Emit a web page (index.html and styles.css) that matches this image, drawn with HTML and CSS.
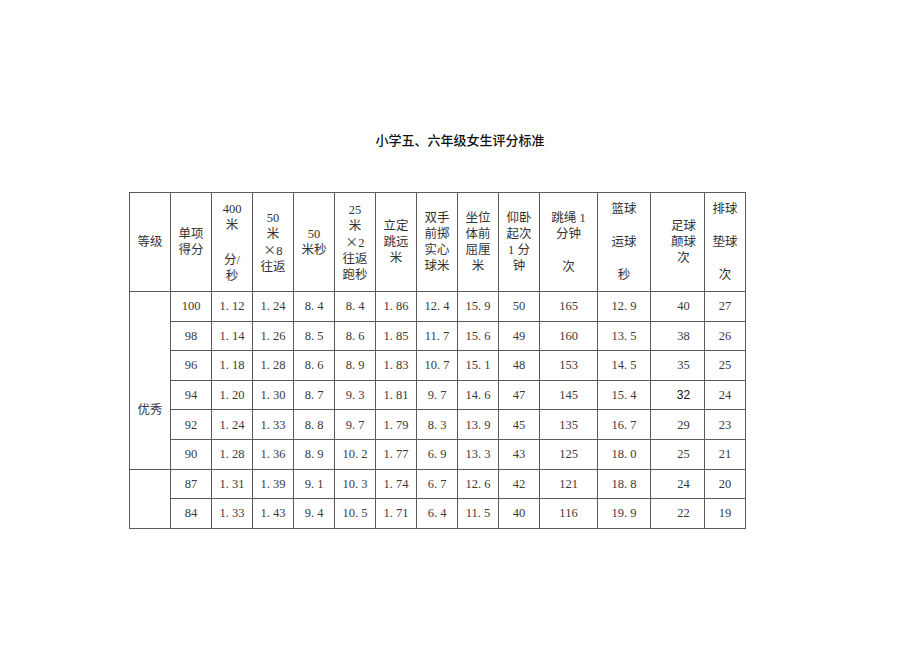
FILE: index.html
```html
<!DOCTYPE html>
<html lang="zh">
<head>
<meta charset="utf-8">
<title>小学五、六年级女生评分标准</title>
<link rel="stylesheet" href="styles.css">
</head>
<body>
<div class="page">
  <h1 class="title">小学五、六年级女生评分标准</h1>
  <table class="grid">
    <colgroup>
      <col class="c41"><col class="c41"><col class="c41"><col class="c41"><col class="c41">
      <col class="c41"><col class="c41"><col class="c41"><col class="c41"><col class="c41">
      <col class="c58"><col class="c53"><col class="c54"><col class="c41">
    </colgroup>
    <tr class="head">
      <td>等级</td>
      <td>单项<br>得分</td>
      <td>400<br>米<div class="sp19"></div>分/<br>秒</td>
      <td>50<br>米<br><span class="cjk">×</span>8<br>往返</td>
      <td>50<br>米秒</td>
      <td>25<br>米<br><span class="cjk">×</span>2<br>往返<br>跑秒</td>
      <td>立定<br>跳远<br>米</td>
      <td>双手<br>前掷<br>实心<br>球米</td>
      <td>坐位<br>体前<br>屈厘<br>米</td>
      <td>仰卧<br>起次<br>1 分<br>钟</td>
      <td>跳绳 1<br>分钟<div class="sp16"></div>次</td>
      <td class="soft">篮球<div class="sp17"></div>运球<div class="sp17"></div>秒</td>
      <td class="soft shift">足球<br>颠球<br>次</td>
      <td class="soft">排球<div class="sp17"></div>垫球<div class="sp17"></div>次</td>
    </tr>
    <tr>
      <td class="grade" rowspan="6">优秀</td>
      <td>100</td><td>1. 12</td><td>1. 24</td><td>8. 4</td><td>8. 4</td><td>1. 86</td><td>12. 4</td><td>15. 9</td><td>50</td><td>165</td><td class="soft">12. 9</td><td class="soft shift">40</td><td class="soft">27</td>
    </tr>
    <tr>
      <td>98</td><td>1. 14</td><td>1. 26</td><td>8. 5</td><td>8. 6</td><td>1. 85</td><td>11. 7</td><td>15. 6</td><td>49</td><td>160</td><td class="soft">13. 5</td><td class="soft shift">38</td><td class="soft">26</td>
    </tr>
    <tr class="light">
      <td>96</td><td>1. 18</td><td>1. 28</td><td>8. 6</td><td>8. 9</td><td>1. 83</td><td>10. 7</td><td>15. 1</td><td>48</td><td>153</td><td class="soft">14. 5</td><td class="soft shift">35</td><td class="soft">25</td>
    </tr>
    <tr>
      <td>94</td><td>1. 20</td><td>1. 30</td><td>8. 7</td><td>9. 3</td><td>1. 81</td><td>9. 7</td><td>14. 6</td><td>47</td><td>145</td><td class="soft">15. 4</td><td class="soft shift"><span class="sans">32</span></td><td class="soft">24</td>
    </tr>
    <tr>
      <td>92</td><td>1. 24</td><td>1. 33</td><td>8. 8</td><td>9. 7</td><td>1. 79</td><td>8. 3</td><td>13. 9</td><td>45</td><td>135</td><td class="soft">16. 7</td><td class="soft shift">29</td><td class="soft">23</td>
    </tr>
    <tr>
      <td>90</td><td>1. 28</td><td>1. 36</td><td>8. 9</td><td>10. 2</td><td>1. 77</td><td>6. 9</td><td>13. 3</td><td>43</td><td>125</td><td class="soft">18. 0</td><td class="soft shift">25</td><td class="soft">21</td>
    </tr>
    <tr class="light">
      <td class="grade" rowspan="2"></td>
      <td>87</td><td>1. 31</td><td>1. 39</td><td>9. 1</td><td>10. 3</td><td>1. 74</td><td>6. 7</td><td>12. 6</td><td>42</td><td>121</td><td class="soft">18. 8</td><td class="soft shift">24</td><td class="soft">20</td>
    </tr>
    <tr>
      <td>84</td><td>1. 33</td><td>1. 43</td><td>9. 4</td><td>10. 5</td><td>1. 71</td><td>6. 4</td><td>11. 5</td><td>40</td><td>116</td><td class="soft">19. 9</td><td class="soft shift">22</td><td class="soft">19</td>
    </tr>
  </table>
</div>
</body>
</html>
```

FILE: styles.css
```css
html, body {
  margin: 0;
  padding: 0;
  background: #ffffff;
}

.page {
  width: 920px;
  height: 651px;
  padding-top: 132px;
  box-sizing: border-box;
  font-family: "Liberation Serif", "Noto Sans CJK SC", serif;
  color: #333333;
}

.title {
  margin: 0;
  text-align: center;
  font-family: "Noto Sans CJK SC", sans-serif;
  font-size: 13px;
  line-height: 16px;
  font-weight: 500;
  color: #111111;
}

.grid {
  margin: 44px 0 0 129px;
  border-collapse: collapse;
  table-layout: fixed;
  width: 617px;
  font-size: 12.5px;
  line-height: 16px;
}

.c41 { width: 41px; }
.c58 { width: 58px; }
.c53 { width: 53px; }
.c54 { width: 54px; }

.grid td {
  border: 1px solid #5a5a5a;
  padding: 0;
  text-align: center;
  vertical-align: middle;
  height: 28.6px;
  color: #3a3a3a;
}

.grid tr.head td {
  height: 98px;
  color: #333333;
}

.grid tr.light td {
  border-top-color: #9a9a9a;
}

.grid td.soft {
  border-left-color: #a0a0a0;
}

.grid td.shift {
  padding-left: 12px;
}

.grid td.grade {
  vertical-align: top;
  padding-top: 110px;
  border-top-color: #5a5a5a;
}

.grid tr.light td.grade {
  padding-top: 0;
}

.cjk {
  font-family: "Noto Sans CJK SC", sans-serif;
}

.sp16 { height: 17px; }
.sp17 { height: 17px; }
.sp19 { height: 19px; }

.sans {
  font-family: "Liberation Sans", sans-serif;
  font-size: 12px;
  color: #111111;
}
```
